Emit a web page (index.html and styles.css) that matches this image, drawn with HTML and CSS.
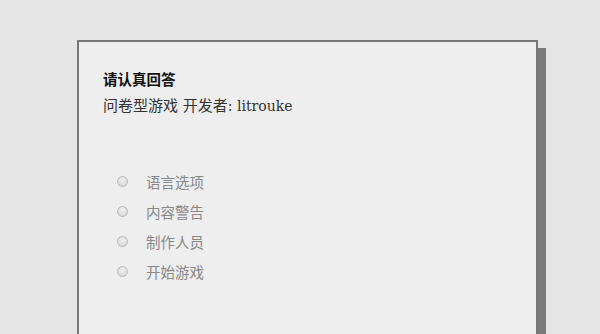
FILE: index.html
```html
<!DOCTYPE html>
<html lang="zh">
<head>
<meta charset="utf-8">
<link rel="stylesheet" href="styles.css">
</head>
<body>
<div class="card">
  <div class="title">请认真回答</div>
  <div class="subtitle">问卷型游戏 开发者<span class="latin">: litrouke</span></div>
  <ul class="options">
    <li><span class="radio"></span><span class="label">语言选项</span></li>
    <li><span class="radio"></span><span class="label">内容警告</span></li>
    <li><span class="radio"></span><span class="label">制作人员</span></li>
    <li><span class="radio"></span><span class="label">开始游戏</span></li>
  </ul>
</div>
</body>
</html>
```

FILE: styles.css
```css
html, body {
  margin: 0;
  padding: 0;
  background: #e5e5e5;
  height: 100%;
  overflow: hidden;
}
body {
  padding-top: 40px;
  padding-left: 77px;
  font-family: "DejaVu Serif", "Noto Sans CJK SC", serif;
}
.card {
  width: 461px;
  height: 400px;
  background: #eeeeee;
  border: 2px solid #777777;
  box-shadow: 8px 8px 0 #7a7a7a;
  padding: 27px 0 0 24px;
  box-sizing: border-box;
}
.title {
  font-family: "Noto Sans CJK SC", sans-serif;
  font-weight: bold;
  font-size: 14.5px;
  line-height: 20px;
  color: #111;
}
.subtitle {
  font-size: 15px;
  line-height: 24px;
  color: #333;
  margin-top: 5px;
}
.latin {
  font-size: 14px;
}
.options {
  list-style: none;
  margin: 48px 0 0 0;
  padding: 0 0 0 14px;
}
.options li {
  display: flex;
  align-items: center;
  height: 30px;
}
.radio {
  width: 9px;
  height: 9px;
  border-radius: 50%;
  border: 1px solid #b8b8b8;
  background: radial-gradient(circle at 50% 35%, #f0f0f0, #d2d2d2);
  margin-right: 18px;
}
.label {
  font-family: "Noto Sans CJK SC", sans-serif;
  font-size: 14.5px;
  color: #888;
}
```
